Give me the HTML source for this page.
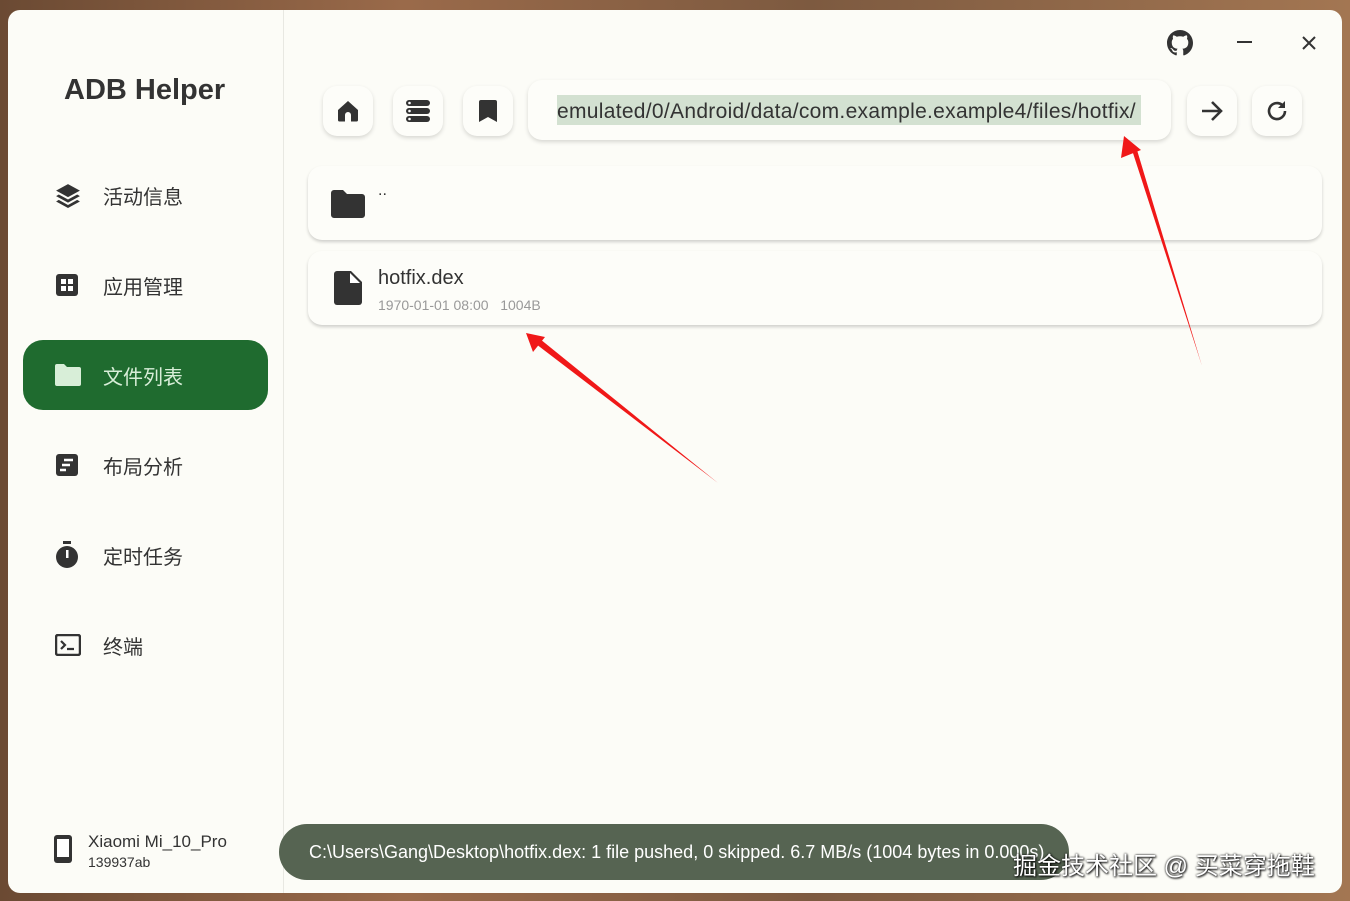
<!DOCTYPE html>
<html><head><meta charset="utf-8"><style>
*{margin:0;padding:0;box-sizing:border-box}
body{width:1350px;height:901px;overflow:hidden;background:linear-gradient(90deg,#6b4a33,#9a6a4a 30%,#7d5a40 60%,#a37652);font-family:"Liberation Sans","Noto Sans CJK SC",sans-serif;position:relative}
.win{position:absolute;left:8px;top:10px;width:1334px;height:883px;background:#fcfcf7;border-radius:12px;overflow:hidden}
.side{position:absolute;left:0;top:0;width:276px;height:100%;border-right:1.5px solid #e8e8e2}
.title{position:absolute;left:56px;top:64px;font-size:29px;font-weight:bold;color:#333}
.nav{position:absolute;left:15px;width:245px;height:70px;border-radius:20px;display:flex;align-items:center;font-size:20px;color:#333}
.nav svg{position:absolute;left:32px}
.nav span{position:absolute;left:80px}
.nav.act{background:#1f6b2f;color:#d8eed8}
.btn{position:absolute;top:76px;width:50px;height:50px;border-radius:14px;background:#fdfdf9;box-shadow:0 2px 4px rgba(0,0,0,.15);display:flex;align-items:center;justify-content:center}
.addr{position:absolute;left:520px;top:70px;width:643px;height:60px;border-radius:14px;background:#fdfdf9;box-shadow:0 2px 4px rgba(0,0,0,.15)}
.addr div{position:absolute;left:29px;top:15px;height:30px;width:584px;background:#d3e1d1;font-size:21px;letter-spacing:0.3px;line-height:33px;color:#333;white-space:nowrap;overflow:hidden}
.card{position:absolute;left:300px;width:1014px;height:74px;border-radius:14px;background:#fdfdf9;box-shadow:0 2px 3px rgba(0,0,0,.18)}
.toast{position:absolute;left:271px;top:814px;width:790px;height:56px;border-radius:28px;background:#566452;color:#fff;font-size:18px;line-height:56px;padding-left:30px;white-space:nowrap;overflow:hidden}
</style></head><body>
<div class="win">
<div class="side">
<div class="title">ADB Helper</div>
<div class="nav" style="top:150px"><svg width="26" height="26" viewBox="0 0 24 24" fill="#333"><path d="M12 2 1 8l11 6 11-6zM3.5 11.5 1 13l11 6 11-6-2.5-1.5L12 16.2zM3.5 16.5 1 18l11 6 11-6-2.5-1.5L12 21.2z"/></svg><span>活动信息</span></div>
<div class="nav" style="top:240px"><svg width="24" height="24" viewBox="0 0 24 24"><rect x="1" y="1" width="22" height="22" rx="3" fill="#333"/><rect x="6" y="6" width="5" height="5" fill="#fff"/><rect x="13" y="6" width="5" height="5" fill="#fff"/><rect x="6" y="13" width="5" height="5" fill="#fff"/><rect x="13" y="13" width="5" height="5" fill="#fff"/></svg><span>应用管理</span></div>
<div class="nav act" style="top:330px"><svg width="26" height="22" viewBox="0 0 26 22" fill="#d8eed8"><path d="M0 2a2 2 0 0 1 2-2h7l3 3h12a2 2 0 0 1 2 2v15a2 2 0 0 1-2 2H2a2 2 0 0 1-2-2z"/></svg><span>文件列表</span></div>
<div class="nav" style="top:420px"><svg width="24" height="24" viewBox="0 0 24 24"><rect x="1" y="1" width="22" height="22" rx="3" fill="#333"/><path d="M9 7h9M7 12h8M5 17h6" stroke="#fff" stroke-width="2.5"/></svg><span>布局分析</span></div>
<div class="nav" style="top:510px"><svg width="24" height="28" viewBox="0 0 24 28" fill="#333"><rect x="8" y="0" width="8" height="3"/><circle cx="12" cy="16" r="11"/><rect x="11" y="9" width="2.5" height="8" fill="#fff"/></svg><span>定时任务</span></div>
<div class="nav" style="top:600px"><svg width="26" height="22" viewBox="0 0 26 22"><rect x="1" y="1" width="24" height="20" rx="2" fill="none" stroke="#333" stroke-width="2.5"/><path d="M6 7l4 4-4 4M12 15h7" stroke="#333" stroke-width="2.2" fill="none"/></svg><span>终端</span></div>
<svg style="position:absolute;left:46px;top:825px" width="18" height="28" viewBox="0 0 18 28"><rect x="0" y="0" width="18" height="28" rx="3" fill="#333"/><rect x="3" y="4" width="12" height="18" fill="#fff"/></svg>
<div style="position:absolute;left:80px;top:822px;font-size:17px;color:#333">Xiaomi Mi_10_Pro</div>
<div style="position:absolute;left:80px;top:844px;font-size:14px;color:#333">139937ab</div>
</div>
<svg style="position:absolute;left:1159px;top:20px" width="26" height="26" viewBox="0 0 16 16" fill="#333"><path d="M8 0C3.58 0 0 3.58 0 8c0 3.54 2.29 6.53 5.47 7.59.4.07.55-.17.55-.38 0-.19-.01-.82-.01-1.49-2.01.37-2.53-.49-2.69-.94-.09-.23-.48-.94-.82-1.13-.28-.15-.68-.52-.01-.53.63-.01 1.08.58 1.23.82.72 1.21 1.87.87 2.33.66.07-.52.28-.87.51-1.07-1.78-.2-3.64-.89-3.64-3.95 0-.87.31-1.59.82-2.15-.08-.2-.36-1.02.08-2.12 0 0 .67-.21 2.2.82.64-.18 1.32-.27 2-.27.68 0 1.36.09 2 .27 1.53-1.04 2.2-.82 2.2-.82.44 1.1.16 1.92.08 2.12.51.56.82 1.27.82 2.15 0 3.07-1.87 3.75-3.65 3.95.29.25.54.73.54 1.48 0 1.07-.01 1.93-.01 2.2 0 .21.15.46.55.38A8.013 8.013 0 0 0 16 8c0-4.42-3.58-8-8-8z"/></svg>
<div style="position:absolute;left:1229px;top:31px;width:15px;height:2px;background:#333"></div>
<svg style="position:absolute;left:1293px;top:25px" width="16" height="16" viewBox="0 0 16 16"><path d="M2 2l12 12M14 2 2 14" stroke="#333" stroke-width="2"/></svg>
<div class="btn" style="left:315px"><svg width="22" height="22" viewBox="0 0 22 22" fill="#333"><path d="M11 1 1 10v10a1.5 1.5 0 0 0 1.5 1.5H8V15a3 3 0 0 1 6 0v6.5h5.5A1.5 1.5 0 0 0 21 20V10z"/></svg></div>
<div class="btn" style="left:385px"><svg width="24" height="22" viewBox="0 0 24 22" fill="#333"><rect x="0" y="0" width="24" height="6" rx="3"/><rect x="0" y="8" width="24" height="6" rx="3"/><rect x="0" y="16" width="24" height="6" rx="3"/><circle cx="3.5" cy="3" r="1.3" fill="#fff"/><circle cx="3.5" cy="11" r="1.3" fill="#fff"/><circle cx="3.5" cy="19" r="1.3" fill="#fff"/></svg></div>
<div class="btn" style="left:455px"><svg width="18" height="22" viewBox="0 0 18 22" fill="#333"><path d="M2 0h14a2 2 0 0 1 2 2v20l-9-5-9 5V2a2 2 0 0 1 2-2z"/></svg></div>
<div class="addr"><div>emulated/0/Android/data/com.example.example4/files/hotfix/</div></div>
<div class="btn" style="left:1179px"><svg width="24" height="22" viewBox="0 0 24 22"><path d="M2 11h19M12 2l9 9-9 9" stroke="#333" stroke-width="2.6" fill="none"/></svg></div>
<div class="btn" style="left:1244px"><svg width="24" height="24" viewBox="0 0 24 24"><path d="M20 12a8 8 0 1 1-3-6.2" stroke="#333" stroke-width="2.6" fill="none"/><path d="M20 2v7h-7z" fill="#333"/></svg></div>
<div class="card" style="top:156px"><svg style="position:absolute;left:23px;top:24px" width="34" height="28" viewBox="0 0 34 28" fill="#333"><path d="M0 3a3 3 0 0 1 3-3h9l4 4h15a3 3 0 0 1 3 3v18a3 3 0 0 1-3 3H3a3 3 0 0 1-3-3z"/></svg><div style="position:absolute;left:70px;top:16px;font-size:16px;color:#333">..</div></div>
<div class="card" style="top:241px"><svg style="position:absolute;left:26px;top:20px" width="28" height="34" viewBox="0 0 28 34" fill="#333"><path d="M3 0h14l11 11v20a3 3 0 0 1-3 3H3a3 3 0 0 1-3-3V3a3 3 0 0 1 3-3z"/><path d="M16 2v10h10z" fill="#fff"/></svg><div style="position:absolute;left:70px;top:16px;font-size:20px;color:#333">hotfix.dex</div><div style="position:absolute;left:70px;top:46px;font-size:14px;color:#999">1970-01-01 08:00&nbsp;&nbsp; 1004B</div></div>
<div class="toast">C:\Users\Gang\Desktop\hotfix.dex: 1 file pushed, 0 skipped. 6.7 MB/s (1004 bytes in 0.000s)</div>
</div>
<svg style="position:absolute;left:0;top:0" width="1350" height="901">
<polygon points="1202,366 1132,150 1137,150" fill="#f01818"/>
<polygon points="1124,136 1121,158 1141,150" fill="#f01818"/>
<polygon points="718,483 536,344 540,339" fill="#f01818"/>
<polygon points="526,333 533,352 545,337" fill="#f01818"/>
</svg>
<div style="position:absolute;left:1013px;top:846px;font-size:24px;color:#fff;text-shadow:0 0 2px #000,1px 1px 2px #000;white-space:nowrap">掘金技术社区 @ 买菜穿拖鞋</div>
</body></html>
